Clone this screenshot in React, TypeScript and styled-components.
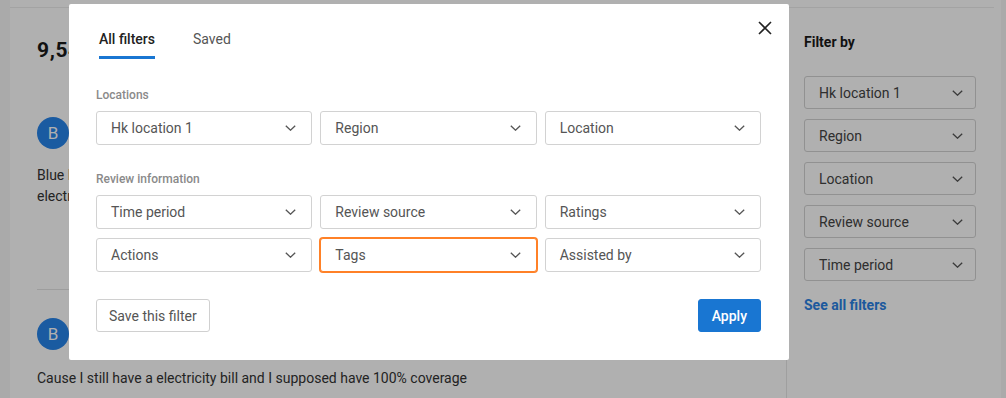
import styled, { createGlobalStyle, css } from "styled-components";

const GlobalStyle = createGlobalStyle`
  body {
    margin: 0;
    font-family: Roboto, "Liberation Sans", sans-serif;
    background: #f6f6f6;
    color: #222;
  }
  * {
    box-sizing: border-box;
  }
`;

const Page = styled.div`
  height: 398px;
  padding: 0 5px 0 10px;
  display: flex;
  overflow: hidden;
`;

const Panel = styled.div`
  flex: 1;
  background: #fff;
  display: flex;
  flex-direction: column;
`;

const TopRule = styled.div`
  height: 8px;
  margin-right: 7px;
  border-bottom: 1px solid #ececec;
`;

const Body = styled.div`
  flex: 1;
  display: flex;
`;

const Main = styled.main`
  width: 776px;
  padding: 30px 26px 0 27px;
`;

const Count = styled.h2`
  margin: 0;
  font-size: 21px;
  line-height: 24px;
  font-weight: 700;
  letter-spacing: 0.6px;
  color: #1a1a1a;
`;

const Review = styled.div<{ $last?: boolean }>`
  padding: ${(p) => (p.$last ? "28px 0 0" : "55px 0 82px")};
  border-bottom: ${(p) => (p.$last ? "none" : "1px solid #e4e4e4")};
`;

const Avatar = styled.div`
  width: 32px;
  height: 32px;
  border-radius: 50%;
  background: #2784ea;
  color: #fff;
  font-size: 17px;
  display: flex;
  align-items: center;
  justify-content: center;
`;

const ReviewText = styled.p<{ $gap: number }>`
  margin: ${(p) => p.$gap}px 0 0;
  font-size: 14px;
  line-height: 21px;
  color: #333;
`;

const Sidebar = styled.aside`
  flex: 1;
  border-left: 1px solid #e6e6e6;
  padding: 24px 25px 0 17px;
`;

const SidebarTitle = styled.h3`
  margin: 0 0 24px;
  font-size: 14px;
  line-height: 20px;
  font-weight: 700;
  color: #1a1a1a;
`;

const SideList = styled.div`
  display: flex;
  flex-direction: column;
  gap: 10px;
`;

const SeeAll = styled.a`
  display: block;
  margin-top: 14px;
  font-size: 14px;
  line-height: 20px;
  font-weight: 700;
  color: #2a82e4;
  text-decoration: none;
`;

const Select = styled.div<{ $focused?: boolean; $compact?: boolean }>`
  height: ${(p) => (p.$compact ? "33px" : "34px")};
  border: 1px solid #d2d2d2;
  border-radius: 3px;
  background: #fff;
  display: flex;
  align-items: center;
  justify-content: space-between;
  padding: ${(p) => (p.$compact ? "0 12px 0 14px" : "0 15px 0 14px")};
  font-size: 14px;
  color: ${(p) => (p.$compact ? "#444" : "#555")};
  ${(p) =>
    p.$focused &&
    css`
      border-color: #ff8127;
      box-shadow: 0 0 0 1px #ff8127;
    `}
`;

const Overlay = styled.div`
  position: fixed;
  inset: 0;
  background: rgba(0, 0, 0, 0.31);
`;

const Modal = styled.div`
  position: fixed;
  left: 69px;
  top: 4px;
  width: 720px;
  background: #fff;
  border-radius: 2px;
  padding: 25px 28px 28px 27px;
`;

const CloseButton = styled.button`
  position: absolute;
  top: 16px;
  right: 16px;
  width: 16px;
  height: 16px;
  padding: 0;
  border: none;
  background: none;
  display: flex;
  align-items: center;
  justify-content: center;
`;

const Tabs = styled.div`
  display: flex;
  gap: 38px;
  margin-left: 3px;
`;

const Tab = styled.div<{ $active?: boolean }>`
  font-size: 14px;
  line-height: 20px;
  padding-bottom: 7px;
  font-weight: ${(p) => (p.$active ? 500 : 400)};
  color: ${(p) => (p.$active ? "#222" : "#555")};
  border-bottom: 3px solid ${(p) => (p.$active ? "#1976d2" : "transparent")};
`;

const SectionLabel = styled.div<{ $top: number }>`
  margin: ${(p) => p.$top}px 0 8px;
  font-size: 12px;
  line-height: 16px;
  font-weight: 500;
  color: #8a8a8a;
`;

const Grid = styled.div`
  display: grid;
  grid-template-columns: repeat(3, 1fr);
  column-gap: 8px;
  row-gap: 9px;
`;

const Footer = styled.div`
  margin-top: 27px;
  display: flex;
  justify-content: space-between;
`;

const Button = styled.button<{ $primary?: boolean }>`
  height: 33px;
  padding: 0 ${(p) => (p.$primary ? "13px" : "12px")};
  border-radius: 3px;
  font-family: Roboto, "Liberation Sans", sans-serif;
  font-size: 14px;
  border: 1px solid ${(p) => (p.$primary ? "#1976d2" : "#d0d0d0")};
  background: ${(p) => (p.$primary ? "#1976d2" : "#fff")};
  color: ${(p) => (p.$primary ? "#fff" : "#555")};
  font-weight: ${(p) => (p.$primary ? 500 : 400)};
`;

function Chevron() {
  return (
    <svg width="11" height="6" viewBox="0 0 11 6" fill="none">
      <path d="M0.8 0.8L5.5 5.2L10.2 0.8" stroke="#555" strokeWidth="1.3" />
    </svg>
  );
}

function Dropdown({
  label,
  focused,
  compact,
}: {
  label: string;
  focused?: boolean;
  compact?: boolean;
}) {
  return (
    <Select $focused={focused} $compact={compact}>
      <span>{label}</span>
      <Chevron />
    </Select>
  );
}

const sideFilters = ["Hk location 1", "Region", "Location", "Review source", "Time period"];
const locationFilters = ["Hk location 1", "Region", "Location"];
const reviewFilters = ["Time period", "Review source", "Ratings", "Actions", "Tags", "Assisted by"];

export default function App() {
  return (
    <>
      <GlobalStyle />
      <Page>
        <Panel>
          <TopRule />
          <Body>
            <Main>
              <Count>9,548 reviews</Count>
              <Review>
                <Avatar>B</Avatar>
                <ReviewText $gap={16}>
                  Blue Ridge came out quickly and fixed the panel, but I still get an
                  <br />
                  electricity bill every month even after the install was finished.
                </ReviewText>
              </Review>
              <Review $last>
                <Avatar>B</Avatar>
                <ReviewText $gap={18}>
                  Cause I still have a electricity bill and I supposed have 100% coverage
                </ReviewText>
              </Review>
            </Main>
            <Sidebar>
              <SidebarTitle>Filter by</SidebarTitle>
              <SideList>
                {sideFilters.map((f) => (
                  <Dropdown key={f} label={f} compact />
                ))}
              </SideList>
              <SeeAll href="#">See all filters</SeeAll>
            </Sidebar>
          </Body>
        </Panel>
      </Page>
      <Overlay />
      <Modal>
        <CloseButton aria-label="Close">
          <svg width="14" height="14" viewBox="0 0 14 14">
            <path d="M1 1L13 13M13 1L1 13" stroke="#222" strokeWidth="1.6" />
          </svg>
        </CloseButton>
        <Tabs>
          <Tab $active>All filters</Tab>
          <Tab>Saved</Tab>
        </Tabs>
        <SectionLabel $top={28}>Locations</SectionLabel>
        <Grid>
          {locationFilters.map((f) => (
            <Dropdown key={f} label={f} />
          ))}
        </Grid>
        <SectionLabel $top={26}>Review information</SectionLabel>
        <Grid>
          {reviewFilters.map((f) => (
            <Dropdown key={f} label={f} focused={f === "Tags"} />
          ))}
        </Grid>
        <Footer>
          <Button>Save this filter</Button>
          <Button $primary>Apply</Button>
        </Footer>
      </Modal>
    </>
  );
}
